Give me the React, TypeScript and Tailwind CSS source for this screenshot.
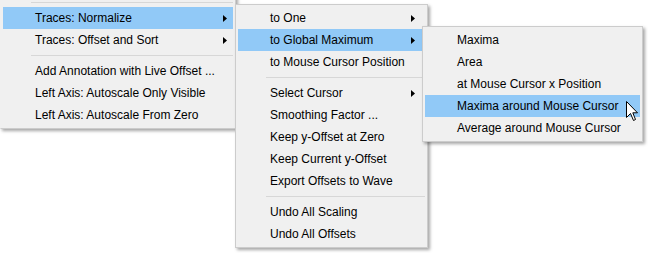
import React from "react";

type Item =
  | { kind: "sep" }
  | { kind: "item"; label: string; sub?: boolean; active?: boolean };

const menuOne: Item[] = [
  { kind: "sep" },
  { kind: "item", label: "Traces: Normalize", sub: true, active: true },
  { kind: "item", label: "Traces: Offset and Sort", sub: true },
  { kind: "sep" },
  { kind: "item", label: "Add Annotation with Live Offset ..." },
  { kind: "item", label: "Left Axis: Autoscale Only Visible" },
  { kind: "item", label: "Left Axis: Autoscale From Zero" },
];

const menuTwo: Item[] = [
  { kind: "item", label: "to One", sub: true },
  { kind: "item", label: "to Global Maximum", sub: true, active: true },
  { kind: "item", label: "to Mouse Cursor Position" },
  { kind: "sep" },
  { kind: "item", label: "Select Cursor", sub: true },
  { kind: "item", label: "Smoothing Factor ..." },
  { kind: "item", label: "Keep y-Offset at Zero" },
  { kind: "item", label: "Keep Current y-Offset" },
  { kind: "item", label: "Export Offsets to Wave" },
  { kind: "sep" },
  { kind: "item", label: "Undo All Scaling" },
  { kind: "item", label: "Undo All Offsets" },
];

const menuThree: Item[] = [
  { kind: "item", label: "Maxima" },
  { kind: "item", label: "Area" },
  { kind: "item", label: "at Mouse Cursor x Position" },
  { kind: "item", label: "Maxima around Mouse Cursor", active: true },
  { kind: "item", label: "Average around Mouse Cursor" },
];

const SubArrow = () => (
  <svg width="4" height="7" viewBox="0 0 4 7" className="shrink-0">
    <path d="M0 0L4 3.5L0 7Z" fill="#000" />
  </svg>
);

function Menu({ items, arrowPad }: { items: Item[]; arrowPad: string }) {
  return (
    <div className="flex flex-col">
      {items.map((it, i) =>
        it.kind === "sep" ? (
          <div key={i} className="h-[9px] flex items-center pl-[28px]">
            <div className="h-px w-full bg-[#d7d7d7]" />
          </div>
        ) : (
          <div
            key={i}
            className={`h-[22px] flex items-center justify-between pl-[32px] ${arrowPad} ${
              it.active ? "bg-[#91c9f7]" : ""
            }`}
          >
            <span className="whitespace-nowrap">{it.label}</span>
            {it.sub && <SubArrow />}
          </div>
        )
      )}
    </div>
  );
}

const Cursor = () => (
  <svg width="13" height="21" viewBox="0 0 13 21" className="absolute left-[626px] top-[101px]">
    <path
      d="M0.5 0.5V16.5L4.5 12.5L7.5 19.5L9.5 18.5L6.8 11.8H11.5Z"
      fill="#fff"
      stroke="#000"
      strokeWidth="1"
      strokeLinejoin="miter"
    />
  </svg>
);

export default function App() {
  return (
    <div
      className="relative w-[648px] h-[253px] bg-white overflow-hidden text-[12px] text-black"
      style={{ fontFamily: '"Liberation Sans", Arial, sans-serif' }}
    >
      {/* main context menu, top cut off */}
      <div className="absolute left-0 top-[-5px] w-[236px] bg-[#f0f0f0] border border-[#cccccc] border-l-[#f0f0f0] p-[2px] shadow-[2px_2px_3px_rgba(0,0,0,0.35)]">
        <Menu items={menuOne} arrowPad="pr-[6px]" />
      </div>

      {/* Normalize submenu */}
      <div className="absolute left-[235px] top-[4px] w-[193px] bg-[#f0f0f0] border border-[#cccccc] p-[2px] shadow-[2px_2px_3px_rgba(0,0,0,0.35)]">
        <Menu items={menuTwo} arrowPad="pr-[10px]" />
      </div>

      {/* Global Maximum submenu */}
      <div className="absolute left-[422px] top-[26px] w-[221px] bg-[#f0f0f0] border border-[#cccccc] p-[2px] shadow-[2px_2px_3px_rgba(0,0,0,0.35)]">
        <Menu items={menuThree} arrowPad="pr-[10px]" />
      </div>

      <Cursor />
    </div>
  );
}
